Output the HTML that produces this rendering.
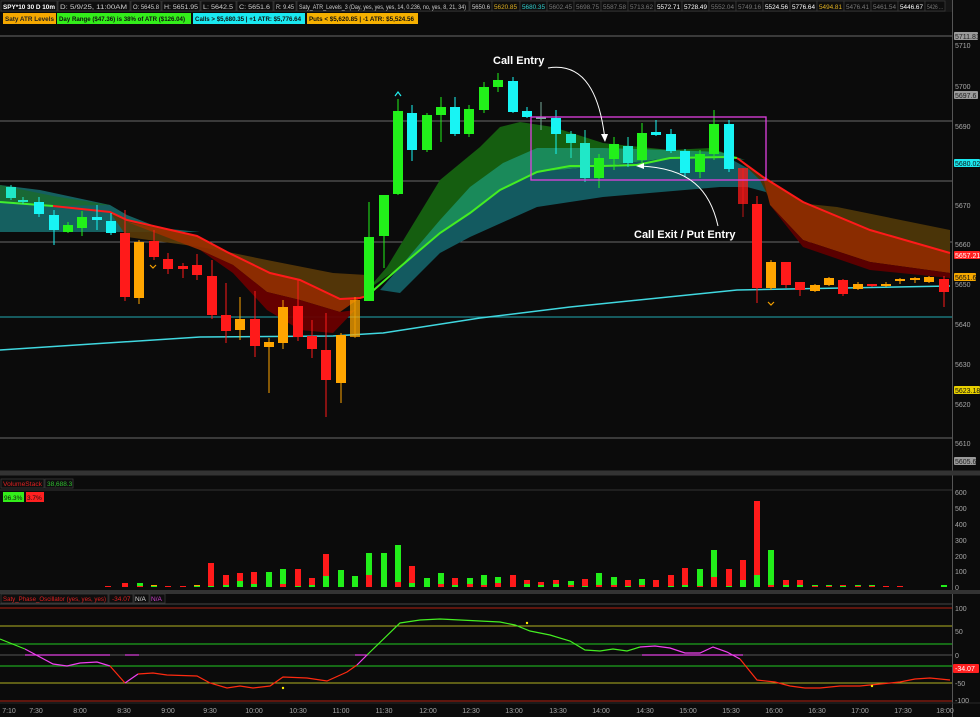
<!DOCTYPE html>
<html><head><meta charset="utf-8"><style>
html,body{margin:0;padding:0;background:#0b0b0b;width:980px;height:717px;overflow:hidden;font-family:"Liberation Sans",sans-serif}
svg{display:block}
.hd{font-size:6.2px;fill:#cfcfcf}
.ax{font-size:7px;fill:#a8a8a8}
</style></head><body>
<svg id="s" width="980" height="717" viewBox="0 0 980 717" xmlns="http://www.w3.org/2000/svg">
<rect width="980" height="717" fill="#0b0b0b"/>
<rect x="0" y="0" width="952" height="12" fill="#161616"/>
<g stroke="#3a3a3a" stroke-width="0.8" fill="#0e0e0e">
<rect x="1" y="1" width="56" height="10"/><rect x="58" y="1" width="72" height="10"/><rect x="131" y="1" width="30" height="10"/><rect x="162" y="1" width="38" height="10"/><rect x="201" y="1" width="35" height="10"/><rect x="237" y="1" width="36" height="10"/><rect x="274" y="1" width="22" height="10"/><rect x="297" y="1" width="172" height="10"/><rect x="470" y="1" width="22" height="10"/>
<rect x="492" y="1" width="28" height="10"/><rect x="520" y="1" width="27" height="10"/><rect x="547" y="1" width="27" height="10"/><rect x="574" y="1" width="27" height="10"/><rect x="601" y="1" width="27" height="10"/><rect x="628" y="1" width="27" height="10"/><rect x="655" y="1" width="27" height="10"/><rect x="682" y="1" width="27" height="10"/><rect x="709" y="1" width="27" height="10"/><rect x="736" y="1" width="27" height="10"/><rect x="763" y="1" width="27" height="10"/><rect x="790" y="1" width="27" height="10"/><rect x="817" y="1" width="27" height="10"/><rect x="844" y="1" width="27" height="10"/><rect x="871" y="1" width="27" height="10"/><rect x="898" y="1" width="27" height="10"/><rect x="925" y="1" width="20" height="10"/>
</g>
<text x="3" y="9" class="hd" font-weight="bold" style="fill:#fff" textLength="52" lengthAdjust="spacingAndGlyphs">SPY*10 30 D 10m</text>
<text x="60" y="9" class="hd" textLength="67" lengthAdjust="spacingAndGlyphs">D: 5/9/25, 11:00AM</text>
<text x="133" y="9" class="hd" textLength="26" lengthAdjust="spacingAndGlyphs">O: 5645.8</text>
<text x="164" y="9" class="hd" textLength="34" lengthAdjust="spacingAndGlyphs">H: 5651.95</text>
<text x="203" y="9" class="hd" textLength="30" lengthAdjust="spacingAndGlyphs">L: 5642.5</text>
<text x="239" y="9" class="hd" textLength="31" lengthAdjust="spacingAndGlyphs">C: 5651.6</text>
<text x="276" y="9" class="hd" textLength="18" lengthAdjust="spacingAndGlyphs">R: 9.45</text>
<text x="299" y="9" class="hd" textLength="167" lengthAdjust="spacingAndGlyphs">Saty_ATR_Levels_3 (Day, yes, yes, yes, 14, 0.236, no, yes, 8, 21, 34)</text>
<text x="472" y="9" class="hd" textLength="18" lengthAdjust="spacingAndGlyphs">5650.6</text>
<g class="hd" lengthAdjust="spacingAndGlyphs">
<text x="494" y="9" style="fill:#e0b020" textLength="23" lengthAdjust="spacingAndGlyphs">5620.85</text>
<text x="522" y="9" style="fill:#30d0d0" textLength="23" lengthAdjust="spacingAndGlyphs">5680.35</text>
<text x="549" y="9" style="fill:#777" textLength="23" lengthAdjust="spacingAndGlyphs">5602.45</text>
<text x="576" y="9" style="fill:#777" textLength="23" lengthAdjust="spacingAndGlyphs">5698.75</text>
<text x="603" y="9" style="fill:#777" textLength="23" lengthAdjust="spacingAndGlyphs">5587.58</text>
<text x="630" y="9" style="fill:#777" textLength="23" lengthAdjust="spacingAndGlyphs">5713.62</text>
<text x="657" y="9" style="fill:#fff" textLength="23" lengthAdjust="spacingAndGlyphs">5572.71</text>
<text x="684" y="9" style="fill:#fff" textLength="23" lengthAdjust="spacingAndGlyphs">5728.49</text>
<text x="711" y="9" style="fill:#777" textLength="23" lengthAdjust="spacingAndGlyphs">5552.04</text>
<text x="738" y="9" style="fill:#777" textLength="23" lengthAdjust="spacingAndGlyphs">5749.16</text>
<text x="765" y="9" style="fill:#fff" textLength="23" lengthAdjust="spacingAndGlyphs">5524.56</text>
<text x="792" y="9" style="fill:#fff" textLength="23" lengthAdjust="spacingAndGlyphs">5776.64</text>
<text x="819" y="9" style="fill:#e0b020" textLength="23" lengthAdjust="spacingAndGlyphs">5494.81</text>
<text x="846" y="9" style="fill:#777" textLength="23" lengthAdjust="spacingAndGlyphs">5476.41</text>
<text x="873" y="9" style="fill:#777" textLength="23" lengthAdjust="spacingAndGlyphs">5461.54</text>
<text x="900" y="9" style="fill:#fff" textLength="23" lengthAdjust="spacingAndGlyphs">5446.67</text>
<text x="927" y="9" style="fill:#777" textLength="16" lengthAdjust="spacingAndGlyphs">5426 ...</text>
</g>
<rect x="3" y="13" width="53" height="11" fill="#f5a800"/><text x="5" y="21" font-size="6.5" font-weight="bold" fill="#222" textLength="49" lengthAdjust="spacingAndGlyphs">Saty ATR Levels</text>
<rect x="57" y="13" width="134" height="11" fill="#33ee1a"/><text x="59" y="21" font-size="6.5" font-weight="bold" fill="#111" textLength="126" lengthAdjust="spacingAndGlyphs">Day Range ($47.36) is 38% of ATR ($126.04)</text>
<rect x="193" y="13" width="112" height="11" fill="#1ae8f0"/><text x="195" y="21" font-size="6.5" font-weight="bold" fill="#111" textLength="106" lengthAdjust="spacingAndGlyphs">Calls &gt; $5,680.35 | +1 ATR: $5,776.64</text>
<rect x="307" y="13" width="111" height="11" fill="#f5b000"/><text x="309" y="21" font-size="6.5" font-weight="bold" fill="#111" textLength="105" lengthAdjust="spacingAndGlyphs">Puts &lt; $5,620.85 | -1 ATR: $5,524.56</text>

<line x1="952.5" y1="0" x2="952.5" y2="717" stroke="#555" stroke-width="1"/>
<line x1="0" y1="473" x2="980" y2="473" stroke="#333" stroke-width="5"/>
<line x1="0" y1="592" x2="980" y2="592" stroke="#333" stroke-width="4"/>
<line x1="0" y1="703" x2="980" y2="703" stroke="#2a2a2a" stroke-width="1"/>

<g stroke="#6a6a6a" stroke-width="1">
<line x1="0" y1="36" x2="952" y2="36"/><line x1="0" y1="121" x2="952" y2="121"/><line x1="0" y1="181" x2="952" y2="181"/><line x1="0" y1="242" x2="952" y2="242"/><line x1="0" y1="438" x2="952" y2="438"/>
</g>
<line x1="0" y1="317" x2="952" y2="317" stroke="#1e8a90" stroke-width="1.3"/>

<path d="M0,185 L40,190 L110,205 L127,215 L160,228 L200,232 L160,232 L110,232 L60,232 L0,232 Z" fill="#177070" opacity="0.85"/>
<path d="M0,185 L53,196 L110,205 L53,206 L0,202Z" fill="#1a6a2a" opacity="0.8"/>
<path d="M110,212 L127,220 L197,236 L227,252 L270,273 L300,280 L340,299 L360,298 L367,296 L367,275 L333,273 L267,260 L233,253 L200,247 L127,237 Z" fill="#5a3a08" opacity="0.9"/>
<path d="M127,222 L197,236 L227,252 L270,273 L300,280 L340,299 L360,298 L340,312 L300,300 L267,292 L233,265 L200,250 Z" fill="#9a3000" opacity="0.9"/>
<path d="M200,250 L233,265 L267,292 L300,300 L340,312 L355,310 L333,333 L300,330 L267,310 L233,273 Z" fill="#6a0000" opacity="0.95"/>
<path d="M367,290 L387,267 L440,180 L480,147 L500,127 L520,122 L553,127 L603,143 L670,150 L710,148 L737,157 L720,160 L670,158 L603,166 L537,172 L500,190 L470,213 L440,233 L400,267 Z" fill="#155e10"/>
<path d="M375,285 L400,267 L440,220 L470,187 L503,163 L537,148 L603,148 L670,150 L720,152 L745,160 L727,157 L670,158 L603,166 L537,172 L500,190 L470,213 L440,233 L400,267Z" fill="#1a8a5a"/>
<path d="M380,290 L400,267 L440,233 L470,213 L500,190 L537,172 L603,166 L670,158 L727,157 L760,175 L777,195 L747,187 L720,187 L603,197 L537,207 L470,237 L440,253 L400,293 Z" fill="#135a60"/>
<path d="M737,158 L763,177 L803,202 L870,230 L950,253 L950,230 L837,207 L770,200 L760,180 Z" fill="#4a3408"/>
<path d="M763,177 L803,202 L870,230 L950,253 L950,273 L870,262 L803,240 L770,205 Z" fill="#8a2c00"/>
<path d="M770,205 L803,240 L870,262 L950,273 L950,278 L870,270 L803,247 Z" fill="#5a0000"/>

<polyline points="0,350 200,337 333,336 383,333 480,318 570,307 737,290 950,286" fill="none" stroke="#40d8e0" stroke-width="1.5"/>
<polyline points="0,202 53,206" fill="none" stroke="#40ee30" stroke-width="2"/>
<polyline points="53,206 110,212 127,220 197,236 227,252 270,273 300,280 340,299 360,298 367,296" fill="none" stroke="#ff1a1a" stroke-width="2"/>
<polyline points="367,296 400,267 440,233 470,213 500,190 537,172 570,166 603,166 637,165 670,158 727,157 737,158" fill="none" stroke="#44ee22" stroke-width="2"/>
<polyline points="737,158 763,177 803,202 870,230 950,253" fill="none" stroke="#ff1a1a" stroke-width="2"/>

<g id="candles"></g>

<polyline points="395,96 398,92 401,96" fill="none" stroke="#2ee" stroke-width="1.2"/>
<polyline points="150,265 153,268 156,265" fill="none" stroke="#f5a000" stroke-width="1.2"/>
<polyline points="768,302 771,305 774,302" fill="none" stroke="#f5a000" stroke-width="1.2"/>

<rect x="531" y="117" width="235" height="63" fill="none" stroke="#e040e0" stroke-width="1.3"/>
<text x="493" y="64" font-size="11" font-weight="bold" fill="#fff">Call Entry</text>
<path d="M548,68 C585,62 600,95 605,140" fill="none" stroke="#fff" stroke-width="1"/>
<path d="M601,134 L605,142 L608,134Z" fill="#fff"/>
<text x="634" y="238" font-size="11" font-weight="bold" fill="#fff">Call Exit / Put Entry</text>
<path d="M718,226 C710,190 690,168 640,166" fill="none" stroke="#fff" stroke-width="1"/>
<path d="M644,163 L636,166 L644,169Z" fill="#fff"/>

<g class="ax">
<text x="955" y="48">5710</text><text x="955" y="89">5700</text><text x="955" y="129">5690</text><text x="955" y="208">5670</text><text x="955" y="247">5660</text><text x="955" y="287">5650</text><text x="955" y="327">5640</text><text x="955" y="367">5630</text><text x="955" y="407">5620</text><text x="955" y="446">5610</text>
</g>
<g font-size="7">
<rect x="954" y="32" width="24" height="8" rx="1" fill="#9a9a9a"/><text x="955" y="39" fill="#222">5711.81</text>
<rect x="954" y="91" width="24" height="8" rx="1" fill="#9a9a9a"/><text x="955" y="98" fill="#222">5697.6</text>
<rect x="954" y="159" width="26" height="8" rx="1" fill="#1ae8f0"/><text x="955" y="166" fill="#111">5680.02</text>
<rect x="954" y="251" width="26" height="8" rx="1" fill="#ff2020"/><text x="955" y="258" fill="#fff">5657.21</text>
<rect x="954" y="273" width="22" height="8" rx="1" fill="#f5a800"/><text x="955" y="280" fill="#111">5651.6</text>
<rect x="954" y="386" width="26" height="8" rx="1" fill="#e8d000"/><text x="955" y="393" fill="#111">5623.18</text>
<rect x="954" y="457" width="22" height="8" rx="1" fill="#9a9a9a"/><text x="955" y="464" fill="#222">5605.6</text>
</g>

<rect x="1" y="479" width="43" height="9" fill="#0e0e0e" stroke="#3a3a3a" stroke-width="0.8"/><text x="3" y="486" font-size="6.5" fill="#e02020" textLength="39" lengthAdjust="spacingAndGlyphs">VolumeStack</text>
<rect x="45" y="479" width="28" height="9" fill="#0e0e0e" stroke="#3a3a3a" stroke-width="0.8"/><text x="47" y="486" font-size="6.5" fill="#30c030">38,688.3</text>
<rect x="3" y="492" width="21" height="10" fill="#33ee1a"/><text x="4" y="500" font-size="6.5" fill="#111">96.3%</text>
<rect x="26" y="492" width="18" height="10" fill="#ff2020"/><text x="27" y="500" font-size="6.5" fill="#111">3.7%</text>
<line x1="0" y1="490" x2="952" y2="490" stroke="#333" stroke-width="1"/>
<g id="vol"></g>
<g class="ax"><text x="955" y="495">600</text><text x="955" y="511">500</text><text x="955" y="527">400</text><text x="955" y="543">300</text><text x="955" y="559">200</text><text x="955" y="574">100</text><text x="955" y="590">0</text></g>

<rect x="1" y="594" width="107" height="9" fill="#0e0e0e" stroke="#3a3a3a" stroke-width="0.8"/><text x="3" y="601" font-size="6.5" fill="#e02020" textLength="103" lengthAdjust="spacingAndGlyphs">Saty_Phase_Oscillator (yes, yes, yes)</text>
<rect x="109" y="594" width="24" height="9" fill="#0e0e0e" stroke="#3a3a3a" stroke-width="0.8"/><text x="112" y="601" font-size="6.5" fill="#e02020">-34.07</text>
<rect x="134" y="594" width="15" height="9" fill="#0e0e0e" stroke="#3a3a3a" stroke-width="0.8"/><text x="135" y="601" font-size="6.5" fill="#ddd">N/A</text>
<rect x="150" y="594" width="15" height="9" fill="#0e0e0e" stroke="#3a3a3a" stroke-width="0.8"/><text x="151" y="601" font-size="6.5" fill="#d040d0">N/A</text>
<line x1="0" y1="604" x2="952" y2="604" stroke="#444" stroke-width="1"/>
<line x1="0" y1="608" x2="952" y2="608" stroke="#b02010" stroke-width="1"/>
<line x1="0" y1="626" x2="952" y2="626" stroke="#b0b020" stroke-width="1"/>
<line x1="0" y1="644" x2="952" y2="644" stroke="#1a8a1a" stroke-width="1.5"/>
<line x1="0" y1="655" x2="952" y2="655" stroke="#555" stroke-width="1"/>
<line x1="0" y1="666" x2="952" y2="666" stroke="#1a8a1a" stroke-width="1.5"/>
<line x1="0" y1="683" x2="952" y2="683" stroke="#b0b020" stroke-width="1"/>
<line x1="0" y1="701" x2="952" y2="701" stroke="#b02010" stroke-width="1"/>
<g stroke="#e040e0" stroke-width="1.2"><line x1="25" y1="655" x2="110" y2="655"/><line x1="125" y1="655" x2="139" y2="655"/><line x1="355" y1="655" x2="368" y2="655"/><line x1="642" y1="655" x2="743" y2="655"/></g>
<polyline points="0,639 25,649" fill="none" stroke="#44ee22" stroke-width="1.2"/>
<polyline points="25,649 53,664 67,666 80,663 97,662 110,666" fill="none" stroke="#f040f0" stroke-width="1.2"/>
<polyline points="110,666 125,683" fill="none" stroke="#ff2a10" stroke-width="1.2"/>
<polyline points="125,683 138,674" fill="none" stroke="#f040f0" stroke-width="1.2"/>
<polyline points="138,674 153,673 167,675 197,676 210,683 227,688 240,686 253,688 270,686 283,677 307,678 327,681 347,672 357,665" fill="none" stroke="#ff2a10" stroke-width="1.2"/>
<polyline points="357,665 367,655" fill="none" stroke="#f040f0" stroke-width="1.2"/>
<polyline points="367,655 400,623 420,620 440,619 460,620 480,621 500,622 515,625 530,631 550,635 570,641 585,650 600,651 613,649 627,651 640,647" fill="none" stroke="#44ee22" stroke-width="1.2"/>
<polyline points="640,647 655,646 670,648 685,653 700,653 713,647 727,652 740,659" fill="none" stroke="#f040f0" stroke-width="1.2"/>
<polyline points="740,659 757,680 775,682 790,686 805,688 820,688 840,686 860,686 880,684 900,682 915,679 930,678 950,680" fill="none" stroke="#ff2a10" stroke-width="1.2"/>
<g fill="#ffee00"><circle cx="283" cy="688" r="1.2"/><circle cx="527" cy="623" r="1.2"/><circle cx="872" cy="686" r="1.2"/></g>
<g class="ax"><text x="955" y="611">100</text><text x="955" y="634">50</text><text x="955" y="658">0</text><text x="955" y="686">-50</text><text x="955" y="703">-100</text></g>
<rect x="953" y="664" width="26" height="9" rx="1" fill="#ff2020"/><text x="955" y="671" font-size="7" fill="#fff">-34.07</text>

<g class="ax" text-anchor="middle">
<text x="9" y="713">7:10</text><text x="36" y="713">7:30</text><text x="80" y="713">8:00</text><text x="124" y="713">8:30</text><text x="168" y="713">9:00</text><text x="210" y="713">9:30</text><text x="254" y="713">10:00</text><text x="298" y="713">10:30</text><text x="341" y="713">11:00</text><text x="384" y="713">11:30</text><text x="428" y="713">12:00</text><text x="471" y="713">12:30</text><text x="514" y="713">13:00</text><text x="558" y="713">13:30</text><text x="601" y="713">14:00</text><text x="645" y="713">14:30</text><text x="688" y="713">15:00</text><text x="731" y="713">15:30</text><text x="774" y="713">16:00</text><text x="817" y="713">16:30</text><text x="860" y="713">17:00</text><text x="903" y="713">17:30</text><text x="945" y="713">18:00</text>
</g>
</svg>
<script>
var G='#22f01a',C='#18f4f4',R='#ff1a1a',O='#ffa500',T='#20e8c8';
var cd=[
[11,187,198,185,200,T],[23,200,202,197,204,T],[39,202,214,197,217,C],[54,215,230,210,245,C],[68,225,232,222,233,G],[82,217,228,211,236,G],[97,217,220,205,230,C],[111,221,233,213,235,C],
[125,233,297,210,301,R],[139,242,298,240,304,O],[154,241,257,230,260,R],[168,259,269,253,274,R],[183,266,269,263,278,R],[197,265,275,254,280,R],
[212,276,315,260,319,R],[226,315,331,283,343,R],[240,319,330,297,340,O],[255,319,346,291,357,R],[269,342,347,338,393,O],[283,307,343,300,349,O],
[298,306,337,279,341,R],[312,336,349,320,358,R],[326,350,380,313,417,R],[341,335,383,333,403,O],[355,300,337,297,338,O],[369,237,301,202,301,G],
[384,195,236,195,268,G],[398,111,194,99,195,G],[412,113,150,105,161,C],[427,115,150,113,152,G],[441,107,115,97,142,G],[455,107,134,97,136,C],[469,109,134,105,137,G],
[484,87,110,82,113,G],[498,80,87,73,92,G],[513,81,112,77,113,C],[527,111,117,107,118,C],[541,117,119,102,130,'#7a9'],[556,118,134,110,154,C],
[571,134,143,131,158,T],[585,143,178,130,182,T],[599,158,178,154,188,G],[614,144,159,137,170,G],[628,146,163,137,167,T],[642,133,160,123,163,G],
[656,132,135,120,136,C],[671,134,151,129,153,C],[685,151,173,149,177,C],[700,154,172,150,178,G],[714,124,154,110,160,G],[729,124,169,120,172,C],
[743,168,204,168,217,R],[757,204,288,196,303,R],[771,262,288,260,290,O],[786,262,285,262,288,R],[800,282,290,282,296,R],[815,285,291,284,292,O],
[829,278,285,277,286,O],[843,280,294,279,296,R],[858,284,289,282,290,O],[872,284,286,284,287,R],[886,284,285,282,287,O],[900,279,281,278,284,O],
[915,278,280,277,283,O],[929,277,282,276,283,O],[944,279,292,276,307,R]];
var h='';
cd.forEach(function(c){var col=c[5],op=(c[0]==355||c[0]==743)?0.75:1;
h+='<line x1="'+c[0]+'" y1="'+c[3]+'" x2="'+c[0]+'" y2="'+c[4]+'" stroke="'+col+'" stroke-width="1" opacity="'+op+'"/>';
h+='<rect x="'+(c[0]-5)+'" y="'+c[1]+'" width="10" height="'+Math.max(2,c[2]-c[1])+'" fill="'+col+'" opacity="'+op+'"/>';});
document.getElementById('candles').innerHTML=h;
var g='#22ee1a',r='#ff1a1a';
var v=[[108,1,0,r],[125,4,0,r],[140,4,1,g],[154,2,1,O],[168,1,0,r],[183,1,0,r],[197,2,1,O],[211,24,1,r],[226,12,2,r],[240,14,6,r],[254,15,3,r],[269,15,0,g],[283,18,3,g],[298,18,1,r],[312,9,2,r],[326,33,11,r],[341,17,0,g],[355,11,0,g],[369,34,12,g],[384,34,0,g],[398,42,5,g],[412,21,4,r],[427,9,0,g],[441,14,3,g],[455,9,2,r],[470,9,3,g],[484,12,2,g],[498,10,4,g],[513,12,0,r],[527,7,3,r],[541,5,2,r],[556,7,3,r],[571,6,2,g],[585,8,1,r],[599,14,2,g],[614,10,2,g],[628,7,1,r],[642,8,2,g],[656,7,0,r],[671,12,1,r],[685,19,2,r],[700,18,1,g],[714,37,10,g],[729,18,1,r],[743,27,7,r],[757,86,12,r],[771,37,2,g],[786,7,2,r],[800,7,2,r],[815,2,1,g],[829,2,1,g],[843,2,1,r],[858,2,1,g],[872,2,1,g],[886,1,0,r],[900,1,0,r],[944,2,0,g]];
var hv='';
v.forEach(function(b){var other=(b[3]==g)?r:g;var base=587;
hv+='<rect x="'+(b[0]-3)+'" y="'+(base-b[1])+'" width="6" height="'+b[1]+'" fill="'+b[3]+'"/>';
if(b[2]>0)hv+='<rect x="'+(b[0]-3)+'" y="'+(base-b[2])+'" width="6" height="'+b[2]+'" fill="'+other+'"/>';});
document.getElementById('vol').innerHTML=hv;
</script>
</body></html>
